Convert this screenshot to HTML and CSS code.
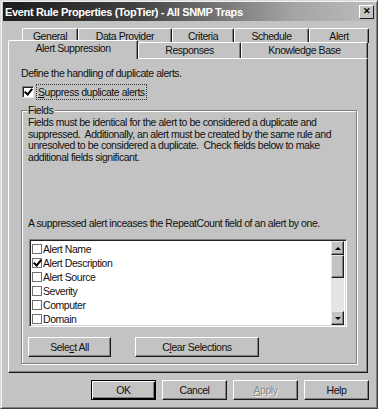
FILE: index.html
```html
<!DOCTYPE html>
<html>
<head>
<meta charset="utf-8">
<link rel="stylesheet" href="styles.css">
</head>
<body>
<div class="window">
  <div class="titlebar">
    <span class="title">Event Rule Properties (TopTier) - All SNMP Traps</span>
    <span class="close">&#x2715;</span>
  </div>
  <div class="tabs">
    <div class="tabrow row1">
      <div class="tab">General</div>
      <div class="tab">Data Provider</div>
      <div class="tab">Criteria</div>
      <div class="tab">Schedule</div>
      <div class="tab">Alert</div>
    </div>
    <div class="tabrow row2">
      <div class="tab active">Alert Suppression</div>
      <div class="tab">Responses</div>
      <div class="tab">Knowledge Base</div>
    </div>
  </div>
  <div class="panel">
    <div class="intro">Define the handling of duplicate alerts.</div>
    <div class="suppress">
      <span class="cbox checked"></span>
      <span class="focus"><u>S</u>uppress duplicate alerts</span>
    </div>
    <div class="group">
      <div class="legend">Fields</div>
      <p class="desc">Fields must be identical for the alert to be considered a duplicate and suppressed.&nbsp; Additionally, an alert must be created by the same rule and unresolved to be considered a duplicate.&nbsp; Check fields below to make additional fields significant.</p>
      <p class="repeat">A suppressed alert inceases the RepeatCount field of an alert by one.</p>
      <div class="listbox">
        <div class="items">
          <div class="item"><span class="lbox"></span>Alert Name</div>
          <div class="item"><span class="lbox checked"></span>Alert Description</div>
          <div class="item"><span class="lbox"></span>Alert Source</div>
          <div class="item"><span class="lbox"></span>Severity</div>
          <div class="item"><span class="lbox"></span>Computer</div>
          <div class="item"><span class="lbox"></span>Domain</div>
        </div>
        <div class="scrollbar">
          <div class="sbtn up"><span class="tri-up"></span></div>
          <div class="thumb"></div>
          <div class="track"></div>
          <div class="sbtn down"><span class="tri-down"></span></div>
        </div>
      </div>
      <div class="grpbtns">
        <div class="btn selall">Sele<u>c</u>t All</div>
        <div class="btn clear">C<u>l</u>ear Selections</div>
      </div>
    </div>
  </div>
  <div class="footer">
    <div class="btn dlg default">OK</div>
    <div class="btn dlg">Cancel</div>
    <div class="btn dlg disabled"><u>A</u>pply</div>
    <div class="btn dlg">Help</div>
  </div>
</div>
</body>
</html>
```
FILE: styles.css
```css
* { box-sizing: border-box; }
html, body { margin: 0; padding: 0; background: #c0c0c0; }
body {
  font-family: "Liberation Sans", Arial, sans-serif;
  font-size: 10.5px;
  letter-spacing: -0.45px;
  color: #111;
}
.window {
  width: 378px;
  height: 409px;
  background: #c3c3c3;
  border-top: 1px solid #d8d8d8;
  border-left: 1px solid #d8d8d8;
  border-right: 1px solid #404040;
  border-bottom: 1px solid #404040;
  box-shadow: inset 1px 1px 0 #f4f4f4, inset -1px -1px 0 #808080;
  padding: 1px 2px 2px 2px;
  display: flex;
  flex-direction: column;
}
.titlebar {
  height: 19px;
  background: linear-gradient(to right, #1c1c1c 0%, #404040 35%, #a4a4a4 78%, #bcbcbc 100%);
  display: flex;
  align-items: center;
  justify-content: space-between;
  padding: 0 1px 0 2px;
}
.title {
  color: #fff;
  font-weight: bold;
  font-size: 11px;
  letter-spacing: -0.35px;
}
.close {
  width: 15px;
  height: 14px;
  background: #c3c3c3;
  border-top: 1px solid #fff;
  border-left: 1px solid #fff;
  border-right: 1px solid #202020;
  border-bottom: 1px solid #202020;
  font-size: 9px;
  font-weight: bold;
  color: #000;
  display: flex;
  align-items: center;
  justify-content: center;
  line-height: 1;
  letter-spacing: 0;
}
.tabs {
  margin-top: 7px;
  display: flex;
  flex-direction: column;
  padding-left: 5px;
}
.tabrow { display: grid; }
.row1 { grid-template-columns: 56px 94px 62px 75px 60px; margin-left: 14px; height: 14px; }
.row2 { grid-template-columns: 130px 103px 127px; height: 16px; }
.tab {
  border-top: 1px solid #fff;
  border-left: 1px solid #fff;
  border-right: 1px solid #1a1a1a;
  box-shadow: inset -1px 0 0 #808080;
  border-radius: 2px 2px 0 0;
  text-align: center;
  line-height: 14px;
  white-space: nowrap;
}
.row2 .tab { line-height: 15px; }
.tab.active { position: relative; z-index: 2; margin-top: -2px; height: 19px; background: #c3c3c3; line-height: 14px; }
.panel {
  margin-left: 5px;
  width: 360px;
  height: 315px;
  border-left: 1px solid #fff;
  border-right: 1px solid #1a1a1a;
  border-bottom: 1px solid #1a1a1a;
  border-top: 1px solid #fff;
  box-shadow: inset -1px -1px 0 #808080;
  padding: 8px 10px 0 12px;
}
.intro { height: 13px; line-height: 13px; }
.suppress {
  display: flex;
  align-items: center;
  margin-top: 4px;
  height: 16px;
}
.cbox {
  width: 12px;
  height: 12px;
  background: #fff;
  border-top: 1px solid #808080;
  border-left: 1px solid #808080;
  border-right: 1px solid #e8e8e8;
  border-bottom: 1px solid #e8e8e8;
  box-shadow: inset 1px 1px 0 #202020;
  position: relative;
  margin-left: 1px;
}
.checked::after {
  content: "";
  position: absolute;
  width: 3px;
  height: 6px;
  border-right: 2px solid #000;
  border-bottom: 2px solid #000;
  transform: rotate(40deg);
  left: 3px;
  top: 0px;
}
.focus {
  margin-left: 2px;
  padding: 1px 1px;
  border: 1px dotted #333;
  line-height: 12px;
}
.group {
  margin-top: 10px;
  width: 336px;
  height: 254px;
  border: 1px solid #808080;
  box-shadow: 1px 1px 0 #fff, inset 1px 1px 0 #fff;
  position: relative;
  padding: 6px 6px 0 6px;
}
.legend {
  position: absolute;
  top: -7px;
  left: 5px;
  background: #c3c3c3;
  padding: 0 2px 0 1px;
  line-height: 13px;
}
.desc { margin: 0; line-height: 11.5px; }
.repeat { margin: 54px 0 0 0; line-height: 13px; }
.listbox {
  margin-top: 9px;
  margin-left: 1px;
  width: 318px;
  height: 88px;
  background: #fff;
  border-top: 1px solid #808080;
  border-left: 1px solid #808080;
  border-right: 1px solid #fff;
  border-bottom: 1px solid #fff;
  box-shadow: inset 1px 1px 0 #202020, inset -1px -1px 0 #d4d4d4;
  display: flex;
  padding: 1px 2px 1px 1px;
}
.items { flex: 1; padding-left: 1px; padding-top: 1px; }
.item { height: 14px; display: flex; align-items: center; }
.lbox {
  width: 10px;
  height: 10px;
  border: 1px solid #707070;
  background: #fff;
  position: relative;
  margin-right: 1px;
}
.lbox.checked::after { left: 2px; top: -1px; width: 3px; height: 6px; }
.scrollbar {
  width: 13px;
  display: flex;
  flex-direction: column;
}
.sbtn, .thumb {
  background: #c3c3c3;
  border-top: 1px solid #e8e8e8;
  border-left: 1px solid #e8e8e8;
  border-right: 1px solid #202020;
  border-bottom: 1px solid #202020;
  box-shadow: inset -1px -1px 0 #808080;
  display: flex;
  align-items: center;
  justify-content: center;
}
.sbtn { height: 14px; }
.thumb { height: 23px; }
.track { flex: 1; background: #e4e4e4; }
.tri-up { width: 0; height: 0; border-left: 3px solid transparent; border-right: 3px solid transparent; border-bottom: 3px solid #000; }
.tri-down { width: 0; height: 0; border-left: 3px solid transparent; border-right: 3px solid transparent; border-top: 3px solid #000; }
.grpbtns {
  display: flex;
  margin-top: 10px;
}
.btn {
  height: 20px;
  background: #c3c3c3;
  border-top: 1px solid #fff;
  border-left: 1px solid #fff;
  border-right: 1px solid #1a1a1a;
  border-bottom: 1px solid #1a1a1a;
  box-shadow: inset -1px -1px 0 #808080;
  display: flex;
  align-items: center;
  justify-content: center;
}
.selall { width: 83px; }
.clear { width: 124px; margin-left: 24px; }
.footer {
  display: flex;
  justify-content: flex-end;
  gap: 6px;
  padding-right: 6px;
  margin-top: 7px;
}
.dlg { width: 65px; }
.default { border: 1px solid #000; box-shadow: inset 1px 1px 0 #fff, inset -1px -1px 0 #000, inset -2px -2px 0 #808080; }
.disabled { color: #8a8a8a; text-shadow: 1px 1px 0 #f0f0f0; }
```
